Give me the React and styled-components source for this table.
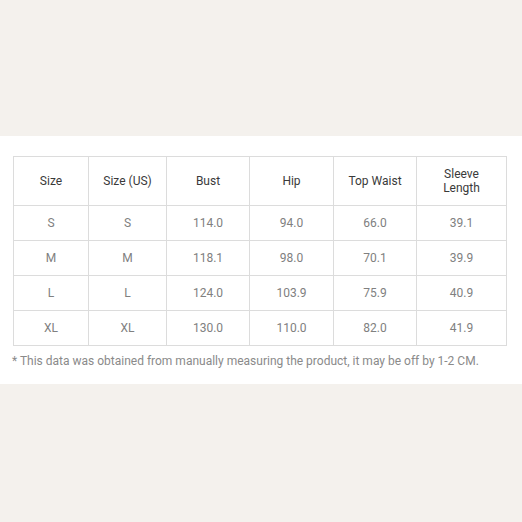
import React from "react";
import styled, { createGlobalStyle } from "styled-components";

const GlobalStyle = createGlobalStyle`
  html, body {
    margin: 0;
    padding: 0;
    background: #f4f1ed;
  }
  body {
    font-family: Roboto, "Liberation Sans", sans-serif;
  }
`;

const Page = styled.div`
  width: 522px;
  height: 522px;
  display: flex;
  flex-direction: column;
  background: #f4f1ed;
`;

const Band = styled.div`
  height: 136px;
  flex: none;
`;

const Sheet = styled.div`
  background: #fff;
  height: 248px;
  padding: 20px 0 0 13px;
  box-sizing: border-box;
`;

const Table = styled.table`
  border-collapse: collapse;
  table-layout: fixed;
  width: 493px;
`;

const Th = styled.th`
  border: 1px solid #dcdcdc;
  height: 48px;
  padding: 0;
  font-weight: 400;
  font-size: 12px;
  line-height: 14px;
  color: #3a3a3a;
  text-align: center;
`;

const Td = styled.td`
  border: 1px solid #dcdcdc;
  height: 34px;
  padding: 0;
  font-size: 12px;
  color: #808080;
  text-align: center;
`;

const Note = styled.p`
  margin: 8px 0 0 -1px;
  font-size: 12px;
  color: #8a8a8a;
`;

const widths = [75, 78, 83, 84, 83, 90];
const head = ["Size", "Size (US)", "Bust", "Hip", "Top Waist"];
const rows = [
  ["S", "S", "114.0", "94.0", "66.0", "39.1"],
  ["M", "M", "118.1", "98.0", "70.1", "39.9"],
  ["L", "L", "124.0", "103.9", "75.9", "40.9"],
  ["XL", "XL", "130.0", "110.0", "82.0", "41.9"],
];

const App = () => {
  return (
    <Page>
      <GlobalStyle />
      <Band />
      <Sheet>
        <Table>
          <colgroup>
            {widths.map((w, i) => (
              <col key={i} style={{ width: w }} />
            ))}
          </colgroup>
          <thead>
            <tr>
              {head.map((h) => (
                <Th key={h}>{h}</Th>
              ))}
              <Th>
                Sleeve
                <br />
                Length
              </Th>
            </tr>
          </thead>
          <tbody>
            {rows.map((r) => (
              <tr key={r[0]}>
                {r.map((c, i) => (
                  <Td key={i}>{c}</Td>
                ))}
              </tr>
            ))}
          </tbody>
        </Table>
        <Note>
          * This data was obtained from manually measuring the product, it may
          be off by 1-2 CM.
        </Note>
      </Sheet>
      <Band />
    </Page>
  );
};

export default App;
